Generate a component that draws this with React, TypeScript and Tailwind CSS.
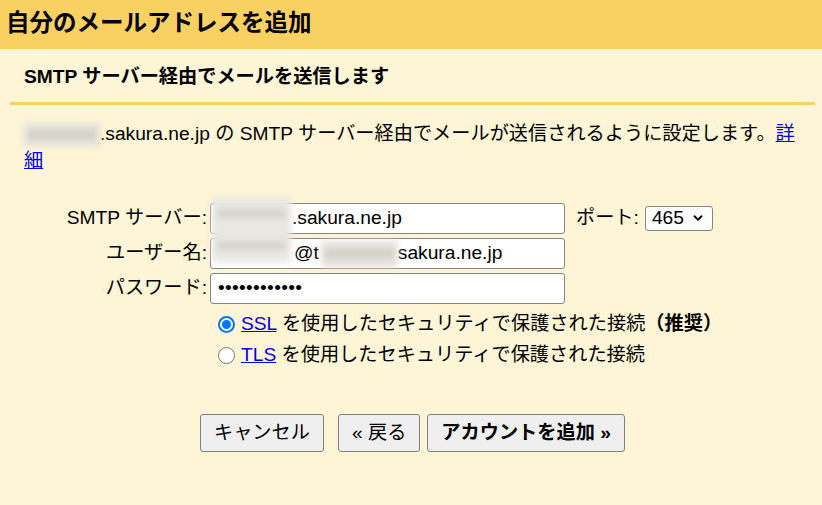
import { ChevronDown } from "lucide-react";

const font = "font-['Liberation_Sans','Noto_Sans_CJK_JP',sans-serif]";

function Radio({ checked }: { checked?: boolean }) {
  return checked ? (
    <span className="flex h-[17px] w-[17px] items-center justify-center rounded-full bg-[#0075ff]">
      <span className="flex h-[13px] w-[13px] items-center justify-center rounded-full bg-white">
        <span className="h-[9px] w-[9px] rounded-full bg-[#0075ff]" />
      </span>
    </span>
  ) : (
    <span className="h-[17px] w-[17px] rounded-full border-[1.5px] border-[#767676] bg-white" />
  );
}

// redacted part of an address: a blurred grey patch with a faint ink band
function Smudge({ className }: { className: string }) {
  return (
    <span
      className={`inline-flex items-center bg-[#e5e2db] px-[4px] blur-[3px] align-middle ${className}`}
    >
      <span className="h-[7px] w-full bg-[#cfccc5]" />
    </span>
  );
}

function Field({ children }: { children: React.ReactNode }) {
  return (
    <div className="flex h-[31px] items-center whitespace-nowrap rounded-[3px] border border-[#858585] bg-white pl-[2px]">
      {children}
    </div>
  );
}

function Btn({ children, bold }: { children: React.ReactNode; bold?: boolean }) {
  return (
    <button
      className={`h-[38px] rounded-[3px] border border-[#808080] bg-[#efefef] px-[13px] text-black ${
        bold ? "font-bold" : ""
      }`}
    >
      {children}
    </button>
  );
}

export default function App() {
  return (
    <div className={`min-h-screen bg-[#fef5d6] text-[19.2px] text-black ${font}`}>
      <header className="flex h-[49px] items-center bg-[#f9d163] px-[6px] pb-[1px]">
        <h1 className="text-[23.5px] font-bold">自分のメールアドレスを追加</h1>
      </header>

      <div className="pl-[10px] pr-[7px]">
        <h2 className="flex h-[53px] items-center pl-[14px] pt-[3px] font-bold">
          SMTP サーバー経由でメールを送信します
        </h2>
        <div className="h-[3px] bg-[#f9d163]" />
        <p className="mr-[6px] mt-[15px] pl-[14px] leading-[27px]">
          <Smudge className="h-[24px] w-[76px]" />
          .sakura.ne.jp の SMTP サーバー経由でメールが送信されるように設定します。
          <a href="#" className="text-[#0000ee] underline">
            詳細
          </a>
        </p>
      </div>

      {/* server settings */}
      <div className="relative mt-[29px] grid grid-cols-[210px_355px_auto] items-center gap-y-[4px]">
        <label className="pr-[3px] text-right">SMTP サーバー:</label>
        <Field>
          <span className="inline-block w-[79px]" />
          .sakura.ne.jp
        </Field>
        <div className="flex items-center pl-[11px]">
          <span>ポート:</span>
          <div className="ml-[6px] flex h-[25px] w-[68px] items-center justify-between rounded-[3px] border border-[#858585] bg-white pl-[6px] pr-[7px]">
            <span>465</span>
            <ChevronDown size={14} strokeWidth={3.2} />
          </div>
        </div>

        <label className="pr-[3px] text-right">ユーザー名:</label>
        <Field>
          <span className="inline-block w-[81px]" />
          @t
          <Smudge className="ml-[2px] h-[26px] w-[77px]" />
          sakura.ne.jp
        </Field>
        <div />

        <label className="pr-[3px] text-right">パスワード:</label>
        <Field>
          <span className="pl-[5px] tracking-[0.3px]">••••••••••••</span>
        </Field>
        <div />

        <div className="absolute left-[212px] top-[-6px] flex h-[65px] w-[79px] flex-col justify-around bg-[#e9e7e2] px-[5px] blur-[3px]">
          <span className="h-[7px] bg-[#d3d0ca]" />
          <span className="h-[7px] bg-[#d3d0ca]" />
        </div>
      </div>

      {/* security options */}
      <div className="ml-[218px] mt-[5px] flex flex-col">
        <label className="flex h-[31px] items-center gap-[6px]">
          <Radio checked />
          <span>
            <a href="#" className="text-[#0000ee] underline">
              SSL
            </a>{" "}
            を使用したセキュリティで保護された接続<b>（推奨）</b>
          </span>
        </label>
        <label className="flex h-[31px] items-center gap-[6px]">
          <Radio />
          <span>
            <a href="#" className="text-[#0000ee] underline">
              TLS
            </a>{" "}
            を使用したセキュリティで保護された接続
          </span>
        </label>
      </div>

      <div className="ml-[200px] mt-[43px] flex">
        <Btn>キャンセル</Btn>
        <div className="ml-[14px] flex gap-[7px]">
          <Btn>« 戻る</Btn>
          <Btn bold>アカウントを追加 »</Btn>
        </div>
      </div>
    </div>
  );
}
